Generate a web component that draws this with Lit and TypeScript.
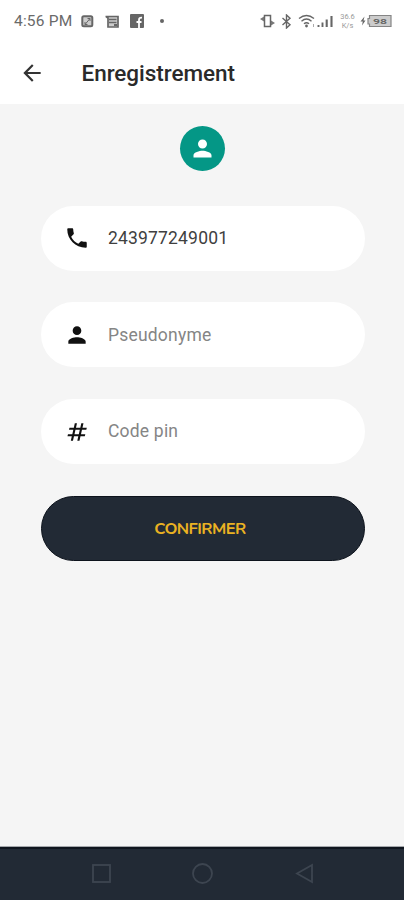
import { LitElement, html, css, svg } from "lit";
import { customElement, property } from "lit/decorators.js";

const person = svg`<path d="M12 12c2.21 0 4-1.79 4-4s-1.79-4-4-4-4 1.79-4 4 1.79 4 4 4zm0 2c-2.67 0-8 1.34-8 4v2h16v-2c0-2.66-5.33-4-8-4z"/>`;
const phone = svg`<path d="M6.62 10.79c1.44 2.83 3.76 5.14 6.59 6.59l2.2-2.2c.27-.27.67-.36 1.02-.24 1.12.37 2.33.57 3.57.57.55 0 1 .45 1 1V20c0 .55-.45 1-1 1-9.39 0-17-7.61-17-17 0-.55.45-1 1-1h3.5c.55 0 1 .45 1 1 0 1.25.2 2.45.57 3.57.11.35.03.74-.25 1.02l-2.2 2.2z"/>`;
const hash = svg`<path d="M20 10V8h-4V4h-2v4h-4V4H8v4H4v2h4v4H4v2h4v4h2v-4h4v4h2v-4h4v-2h-4v-4h4zm-6 4h-4v-4h4v4z" transform="translate(2.9 0) skewX(-13)"/>`;

@customElement("status-bar")
class StatusBar extends LitElement {
  static styles = css`
    :host { display: flex; height: 42px; align-items: center; padding: 0 12px 0 14px; box-sizing: border-box; font-family: Roboto, sans-serif; color: #6a6a6a; justify-content: space-between; }
    .group { display: flex; align-items: center; }
    .time { font-size: 15.5px; width: 67px; white-space: nowrap; letter-spacing: 0.2px; }
    svg { display: block; fill: none; stroke: #666; }
    .app { margin-right: 11px; }
    .dot { width: 4px; height: 4px; border-radius: 50%; background: #666; margin-left: 5px; }
    .vib { margin-right: 6px; }
    .bt { margin-right: 6px; }
    .wifi { margin-right: 1px; }
    .rate { font-size: 7.5px; line-height: 9px; width: 15px; margin: 0 5px 0 6px; text-align: center; color: #999; }
    .rate div { white-space: nowrap; }
    .bat { fill: #666; font: 700 8px Roboto, sans-serif; stroke: none; }
  `;
  render() {
    return html`
      <div class="group">
        <span class="time">4:56 PM</span>
        <svg class="app" width="13" height="13" viewBox="0 0 13 13"><rect x="1.3" y="1.3" width="10" height="10" rx="1.5" fill="#ccc" stroke-width="2"/><path d="M4 9.500V7M4 9.500h2.500M9 3.500V6M9 3.500H6.500M4 9.500 9 3.500" stroke-width="1"/></svg>
        <svg class="app" width="14" height="13" viewBox="0 0 14 13"><path d="M.5 1.500H13V12H3V3L1 1.500" fill="#ccc" stroke-width="1.700"/><path d="M4 4.500h7.500M4 7.500h7.500" stroke-width="1.400"/><path d="M9 10h3" stroke-width="2"/></svg>
        <svg class="app" width="14" height="14" viewBox="0 0 14 14"><rect width="14" height="14" rx="1" fill="#666" stroke="none"/><path d="M9 14V6Q9 3.700 11.500 3.700H12M6.500 8h5" stroke="#fff" stroke-width="1.800"/></svg>
        <span class="dot"></span>
      </div>
      <div class="group">
        <svg class="vib" width="15" height="14" viewBox="0 0 15 14"><rect x="4.500" y="1.500" width="6" height="11" stroke-width="1.500"/><path d="M0 5 4 2.500V7.500zM15 9 11 6.500V11.500z" fill="#777" stroke="none"/></svg>
        <svg class="bt" width="11" height="15" viewBox="0 0 11 15"><path d="M1.500 4 9 10.800 5.500 14V1L9 4.200 1.500 11" stroke-width="1.400"/></svg>
        <svg class="wifi" width="18" height="14" viewBox="0 0 18 14"><path d="M1 4.500Q8.500-1.500 16 4.500M3.500 7.200Q8.500 3 13.500 7.200M6 9.700Q8.500 7.700 11 9.700" stroke-width="1.400"/><circle cx="8.500" cy="12" r="1.400" fill="#666" stroke="none"/><path d="M15.500 10v3" stroke="#aaa"/></svg>
        <svg width="17" height="14" viewBox="0 0 17 14"><path d="M1.500 11v2M5.500 8.500V13" stroke-width="1.900"/><path d="M9.700 5.500V13M14.500 2v11" stroke-width="2.100"/></svg>
        <div class="rate"><div>36.6</div><div>K/s</div></div>
        <svg width="32" height="14" viewBox="0 0 32 14"><path d="M4.500 2.500 .5 7.600h2.300L2 11.500 5.500 6.400h-2z" fill="#666" stroke="none"/><path d="M9.500 1.500H31V12.500H9.500V10H8V4.500H9.500Z" fill="#ccc" stroke="#858585" stroke-width="1.200"/><text class="bat" x="13" y="10" textLength="14" lengthAdjust="spacingAndGlyphs">98</text></svg>
      </div>`;
  }
}

@customElement("form-field")
class FormField extends LitElement {
  @property({ attribute: false }) icon: unknown;
  @property() text = "";
  @property({ type: Boolean, reflect: true }) filled = false;
  static styles = css`
    :host { display: flex; align-items: center; height: 65px; border-radius: 33px; background: #fff; padding-left: 23.5px; box-sizing: border-box; font: 17.5px Roboto, sans-serif; color: #858585; letter-spacing: 0.2px; }
    :host([filled]) { color: #404040; letter-spacing: 0.18px; }
    svg { width: 26px; height: 26px; fill: #111; margin-right: 18px; }
    span { margin-bottom: 0.5px; }
  `;
  render() {
    return html`<svg viewBox="0 0 24 24">${this.icon}</svg><span>${this.text}</span>`;
  }
}

@customElement("app-root")
class AppRoot extends LitElement {
  static styles = css`
    :host { display: flex; flex-direction: column; height: 900px; background: #f5f5f5; font-family: Roboto, sans-serif; overflow: hidden; }
    .top { background: #fff; height: 104px; }
    .bar { display: flex; align-items: center; height: 61px; padding-left: 19px; }
    .bar svg { width: 26px; height: 26px; fill: #333; margin-right: 36.5px; }
    h1 { margin: 0; font-size: 22.5px; font-weight: 500; color: #2a2a2a; letter-spacing: -0.04px; }
    main { flex: 1; display: flex; flex-direction: column; padding: 22px 39.5px 0 40.5px; }
    .avatar { width: 45px; height: 45px; border-radius: 50%; background: #049786; display: flex; align-items: center; justify-content: center; align-self: center; margin-bottom: 34.5px; }
    .avatar svg { width: 27px; height: 27px; fill: #fff; }
    .form { display: flex; flex-direction: column; gap: 31.8px; }
    button { height: 65.5px; border: 1px solid #0d131c; border-radius: 33px; background: #222a35; color: #eab222; font: 700 16.5px "Nunito", Lato, sans-serif; padding: 0 5px 0 0; letter-spacing: -0.6px; }
    nav { height: 53px; box-sizing: border-box; border-top: 2px solid #10161f; background: #222a35; box-shadow: 0 -1px 0 #a5a8ac; display: flex; align-items: center; padding: 0 0 2px 91px; gap: 80px; }
    nav svg { width: 21px; height: 22px; fill: none; stroke: #3d4550; stroke-width: 1.8; }
  `;
  render() {
    return html`
      <div class="top">
        <status-bar></status-bar>
        <div class="bar">
          <svg viewBox="0 0 24 24"><path d="M20 11.1H7.83l5.59-5.69L12 4l-8 8 8 8 1.41-1.41L7.83 12.9H20z"/></svg>
          <h1>Enregistrement</h1>
        </div>
      </div>
      <main>
        <div class="avatar"><svg viewBox="0 0 24 24">${person}</svg></div>
        <div class="form">
          <form-field filled .icon=${phone} text="243977249001"></form-field>
          <form-field .icon=${person} text="Pseudonyme"></form-field>
          <form-field .icon=${hash} text="Code pin"></form-field>
          <button>CONFIRMER</button>
        </div>
      </main>
      <nav>
        <svg viewBox="0 0 21 22"><rect x="2" y="2" width="17" height="17"/></svg>
        <svg viewBox="0 0 21 22"><circle cx="10.5" cy="10.5" r="9.5"/></svg>
        <svg viewBox="0 0 21 22"><path d="M4 10.5 19 2V19Z"/></svg>
      </nav>`;
  }
}
